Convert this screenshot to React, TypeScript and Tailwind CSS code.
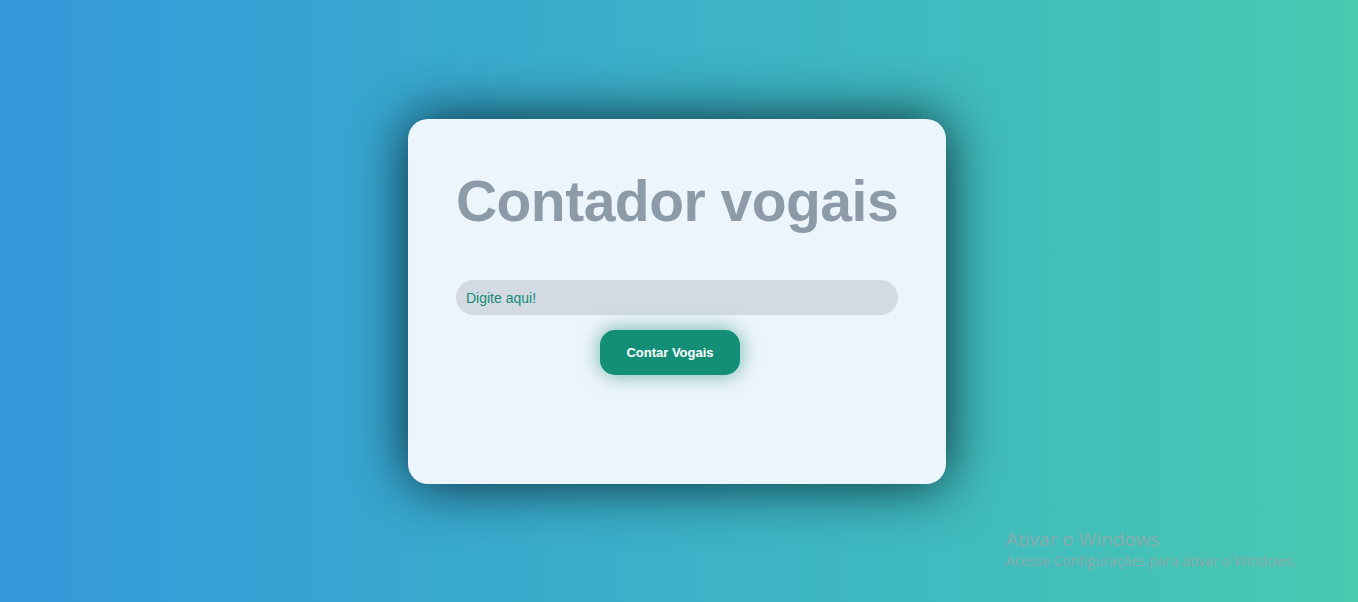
import { useState } from 'react';

export default function App() {
  const [texto, setTexto] = useState('');
  const [total, setTotal] = useState<number | null>(null);

  const contar = () => {
    const n = (texto.match(/[aeiouáàâãéêíóôõú]/gi) || []).length;
    setTotal(n);
  };

  return (
    <div className="relative w-full h-[602px] bg-gradient-to-r from-[#3498db] to-[#48c9b0] flex items-start justify-center font-['Liberation_Sans',Arial,sans-serif] overflow-hidden">
      <div className="mt-[119px] mr-[4px] w-[538px] h-[365px] bg-[#edf5fc] rounded-[20px] shadow-[0_0_55px_rgba(0,15,25,0.85)] flex flex-col items-center">
        <h1 className="mt-[42px] whitespace-nowrap text-[57px] leading-[80px] tracking-[-0.5px] font-bold text-[#8d9aa7]">
          Contador vogais
        </h1>

        <input
          type="text"
          value={texto}
          onChange={e => setTexto(e.target.value)}
          placeholder="Digite aqui!"
          className="mt-[39px] w-[442px] h-[35px] rounded-full bg-[#d3dae3] px-[10px] text-[14px] text-[#168a76] placeholder-[#168a76] outline-none"
        />

        <button
          onClick={contar}
          className="mt-[15px] mr-[14px] w-[140px] h-[45px] rounded-[15px] bg-[#138f77] text-white text-[13px] font-bold shadow-[0_0_20px_rgba(19,130,110,0.6)]"
        >
          Contar Vogais
        </button>

        {total !== null && (
          <p className="mt-4 text-[15px] text-[#5b6b7a]">Total de vogais: {total}</p>
        )}
      </div>

      {/* Windows activation watermark */}
      <div className="absolute left-[1006px] top-[527px] text-[#93a9a9] opacity-90 font-['Open_Sans','Noto_Sans',sans-serif] pointer-events-none">
        <p className="text-[19px] leading-[24px]">Ativar o Windows</p>
        <p className="text-[14px] leading-[20px] tracking-[-0.1px]">Acesse Configurações para ativar o Windows.</p>
      </div>
    </div>
  );
}
